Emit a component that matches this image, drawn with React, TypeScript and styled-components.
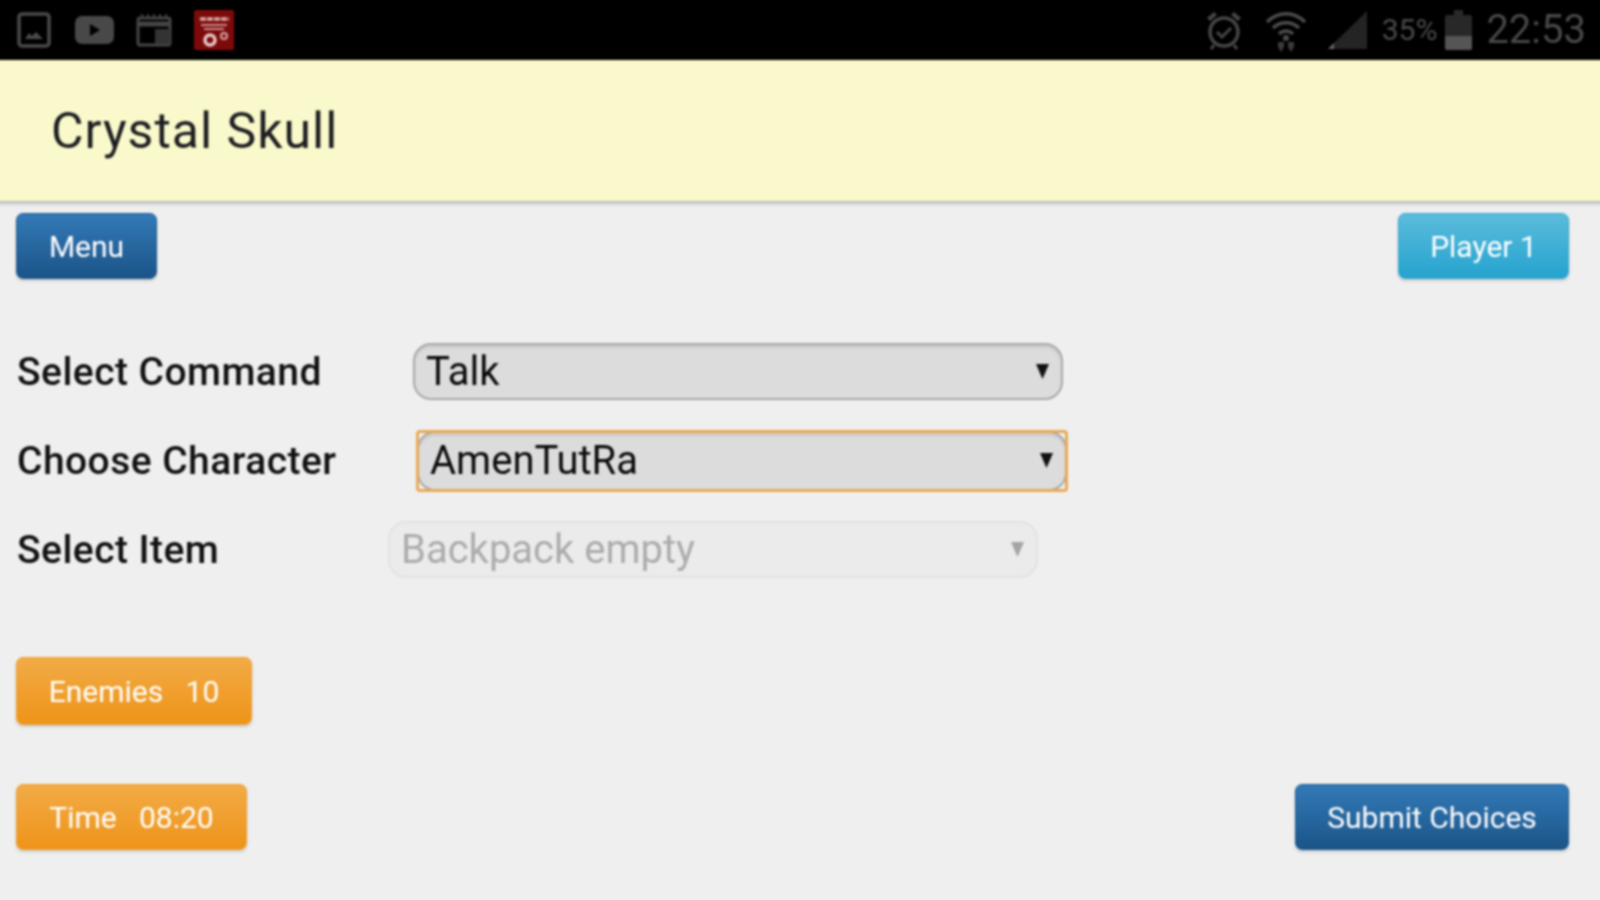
import React, { FC } from 'react';
import styled, { createGlobalStyle } from 'styled-components';

const GlobalStyle = createGlobalStyle`
  html, body {
    margin: 0;
    padding: 0;
    height: 100%;
    background: #efefef;
    overflow: hidden;
  }
  * {
    box-sizing: border-box;
  }
`;

// runs 4px past the window so the blur does not fade at the edges
const Page = styled.div`
  width: 1608px;
  height: 908px;
  margin: -4px;
  display: flex;
  flex-direction: column;
  background: #efefef;
  font-family: Roboto, "Liberation Sans", sans-serif;
  filter: blur(0.8px);
`;

const StatusBar = styled.div`
  height: 64px;
  flex: none;
  background: #000;
  display: flex;
  align-items: center;
  justify-content: space-between;
  padding: 4px 18px 0 21px;
`;

const StatusGroup = styled.div`
  display: flex;
  align-items: center;
`;

const StatusText = styled.span<{ $size: number; $left: number }>`
  font-size: ${(p) => p.$size}px;
  margin-left: ${(p) => p.$left}px;
  color: #484848;
  line-height: 1;
`;

const IconSlot = styled.svg<{ $left?: number }>`
  display: block;
  flex: none;
  margin-left: ${(p) => p.$left ?? 0}px;
`;

const Header = styled.header`
  height: 141px;
  flex: none;
  background: #f9f9cb;
  display: flex;
  align-items: center;
  padding-left: 55px;
  box-shadow: 0 2px 4px rgba(0, 0, 0, 0.3);
`;

const Title = styled.h1`
  margin: 0;
  font-size: 50px;
  font-weight: 400;
  letter-spacing: 1px;
  color: #1e1e22;
`;

const Content = styled.main`
  flex: 1;
  display: flex;
  flex-direction: column;
  padding: 12px 35px 0 20px;
`;

const ButtonRow = styled.div`
  display: flex;
  justify-content: space-between;
  align-items: flex-start;
`;

const tones = {
  blue: { top: '#337ab7', bottom: '#1b5488', border: '#1f5d94' },
  cyan: { top: '#5bbcdc', bottom: '#25a3cf', border: '#37a9d1' },
  orange: { top: '#f2ab46', bottom: '#ee9419', border: '#eea033' },
};

const ActionButton = styled.button<{ $tone: keyof typeof tones; $width: number; $height: number }>`
  width: ${(p) => p.$width}px;
  height: ${(p) => p.$height}px;
  padding: 0;
  border-radius: 7px;
  border: 1px solid ${(p) => tones[p.$tone].border};
  background: linear-gradient(${(p) => tones[p.$tone].top}, ${(p) => tones[p.$tone].bottom});
  box-shadow: 0 2px 3px rgba(0, 0, 0, 0.15);
  color: #fff;
  font-family: inherit;
  font-size: 30px;
  white-space: pre;
`;

const Form = styled.div`
  display: flex;
  flex-direction: column;
  margin-top: 48px;
`;

const FormRow = styled.div`
  display: flex;
  align-items: center;
  height: 89px;
  margin-left: 1px;
`;

const Label = styled.label`
  flex: none;
  width: 371px;
  font-size: 39px;
  font-weight: 500;
  letter-spacing: 0.45px;
  color: #111;
  white-space: nowrap;
`;

type SelectState = 'focused' | 'disabled';

const SelectBox = styled.div<{ $state?: SelectState; $shift: number }>`
  width: 650px;
  height: ${(p) => (p.$state === 'focused' ? 60 : 57)}px;
  margin-left: ${(p) => p.$shift}px;
  border-radius: 3px;
  outline: ${(p) => (p.$state === 'focused' ? '3px solid #eaaa55' : 'none')};
  outline-offset: -2px;
`;

const SelectFace = styled.div<{ $state?: SelectState }>`
  height: 100%;
  display: flex;
  align-items: center;
  justify-content: space-between;
  padding: 0 12px 0 11px;
  border-radius: 18px;
  font-size: 40px;
  background: ${(p) => (p.$state === 'disabled' ? '#ebebeb' : '#dcdcdc')};
  border: 2px solid ${(p) => (p.$state === 'disabled' ? '#e2e2e2' : '#a8a8a8')};
  color: ${(p) => (p.$state === 'disabled' ? '#acacac' : '#0a0a0a')};
  box-shadow: ${(p) => (p.$state === 'disabled' ? 'none' : 'inset 0 3px 2px rgba(0, 0, 0, 0.08)')};
`;

const Caret = styled.svg`
  display: block;
  flex: none;
`;

const LowerRow = styled.div<{ $top: number }>`
  display: flex;
  justify-content: space-between;
  align-items: flex-start;
  margin-top: ${(p) => p.$top}px;
`;

const GalleryIcon = () => (
  <IconSlot width="35" height="36" viewBox="0 0 35 36" fill="none">
    <rect x="2" y="2" width="30" height="32" rx="3" stroke="#4a4a4a" strokeWidth="3.500" />
    <path d="M8 27l4-6 3 3 4-4 7 7z" fill="#4a4a4a" />
  </IconSlot>
);

const VideoIcon = () => (
  <IconSlot $left={23} width="39" height="29" viewBox="0 0 39 29">
    <rect width="39" height="28" rx="7" fill="#484848" />
    <path d="M15 8l10 6-10 6z" fill="#000" />
  </IconSlot>
);

const CalendarIcon = () => (
  <IconSlot $left={22} width="36" height="34" viewBox="0 0 36 34" fill="none">
    <path d="M6 1v4M12 1v4M18 1v4M24 1v4M30 1v4" stroke="#3c3c3c" strokeWidth="2" />
    <rect x="2" y="5" width="32" height="27" rx="2" stroke="#454545" strokeWidth="3" />
    <path d="M2 11h32" stroke="#454545" strokeWidth="5" />
    <path d="M19 16h15v15h-15z" fill="#333" />
  </IconSlot>
);

const AppIcon = () => (
  <IconSlot $left={22} width="40" height="40" viewBox="0 0 40 40">
    <rect width="40" height="40" rx="2" fill="#7d0a0a" />
    <path d="M6 9h29" stroke="#d8a8a8" strokeWidth="3.500" strokeDasharray="6 1" />
    <path d="M7 15h26M10 19h20" stroke="#c98e8e" strokeWidth="2" />
    <circle cx="16" cy="30" r="5" fill="none" stroke="#e6c8c8" strokeWidth="3.500" />
    <circle cx="30" cy="26" r="3" fill="none" stroke="#d8a8a8" strokeWidth="2" />
  </IconSlot>
);

const AlarmIcon = () => (
  <IconSlot width="38" height="42" viewBox="0 0 38 42" fill="none">
    <circle cx="19" cy="23" r="14" stroke="#454545" strokeWidth="3.500" />
    <path d="M12 23l5 5 9-9" stroke="#454545" strokeWidth="3" />
    <path d="M2 9l7-6 3 3-7 6zM36 9l-7-6-3 3 7 6z" fill="#454545" />
    <path d="M9 36l-3 4M29 36l3 4" stroke="#454545" strokeWidth="3" />
  </IconSlot>
);

const WifiIcon = () => (
  <IconSlot $left={22} width="42" height="44" viewBox="0 0 42 44" fill="none">
    <path d="M2 14c11-11 27-11 38 0M8 20c7-7 19-7 26 0M14 26c4-4 10-4 14 0" stroke="#4a4a4a" strokeWidth="3.500" />
    <circle cx="21" cy="30" r="3" fill="#4a4a4a" />
    <path d="M13 34h6v5l-3 5-3-5zM23 34h6v5l-3 5-3-5z" fill="#3a3a3a" />
  </IconSlot>
);

const SignalIcon = () => (
  <IconSlot $left={20} width="40" height="40" viewBox="0 0 40 40">
    <path d="M40 1v38H1z" fill="#242424" />
    <path d="M1 39l6-6v6z" fill="#666" />
  </IconSlot>
);

const BatteryIcon = () => (
  <IconSlot $left={8} width="27" height="40" viewBox="0 0 27 40">
    <path d="M9 0h9v5h7a2 2 0 0 1 2 2v31a2 2 0 0 1-2 2H2a2 2 0 0 1-2-2V7a2 2 0 0 1 2-2h7z" fill="#282828" />
    <path d="M0 26h27v12a2 2 0 0 1-2 2H2a2 2 0 0 1-2-2z" fill="#555" />
  </IconSlot>
);

const CaretDown: FC<{ color: string }> = ({ color }) => (
  <Caret width="13" height="15" viewBox="0 0 13 15">
    <path d="M0 0h13L6.500 15z" fill={color} />
  </Caret>
);

interface FieldProps {
  label: string;
  value: string;
  shift: number;
  state?: SelectState;
}

const Field: FC<FieldProps> = ({ label, value, shift, state }) => (
  <FormRow>
    <Label>{label}</Label>
    <SelectBox $state={state} $shift={shift}>
      <SelectFace $state={state}>
        {value}
        <CaretDown color={state === 'disabled' ? '#a4a4a4' : '#111'} />
      </SelectFace>
    </SelectBox>
  </FormRow>
);

export default function App() {
  return (
    <Page>
      <GlobalStyle />
      <StatusBar>
        <StatusGroup>
          <GalleryIcon />
          <VideoIcon />
          <CalendarIcon />
          <AppIcon />
        </StatusGroup>
        <StatusGroup>
          <AlarmIcon />
          <WifiIcon />
          <SignalIcon />
          <StatusText $size={30} $left={15}>35%</StatusText>
          <BatteryIcon />
          <StatusText $size={40} $left={14}>22:53</StatusText>
        </StatusGroup>
      </StatusBar>
      <Header>
        <Title>Crystal Skull</Title>
      </Header>
      <Content>
        <ButtonRow>
          <ActionButton $tone="blue" $width={141} $height={66}>Menu</ActionButton>
          <ActionButton $tone="cyan" $width={171} $height={66}>Player 1</ActionButton>
        </ButtonRow>
        <Form>
          <Field label="Select Command" value="Talk" shift={25} />
          <Field label="Choose Character" value="AmenTutRa" shift={29} state="focused" />
          <Field label="Select Item" value="Backpack empty" shift={0} state="disabled" />
        </Form>
        <LowerRow $top={63}>
          <ActionButton $tone="orange" $width={236} $height={68}>{'Enemies   10'}</ActionButton>
        </LowerRow>
        <LowerRow $top={59}>
          <ActionButton $tone="orange" $width={231} $height={66}>{'Time   08:20'}</ActionButton>
          <ActionButton $tone="blue" $width={274} $height={66}>Submit Choices</ActionButton>
        </LowerRow>
      </Content>
    </Page>
  );
}
